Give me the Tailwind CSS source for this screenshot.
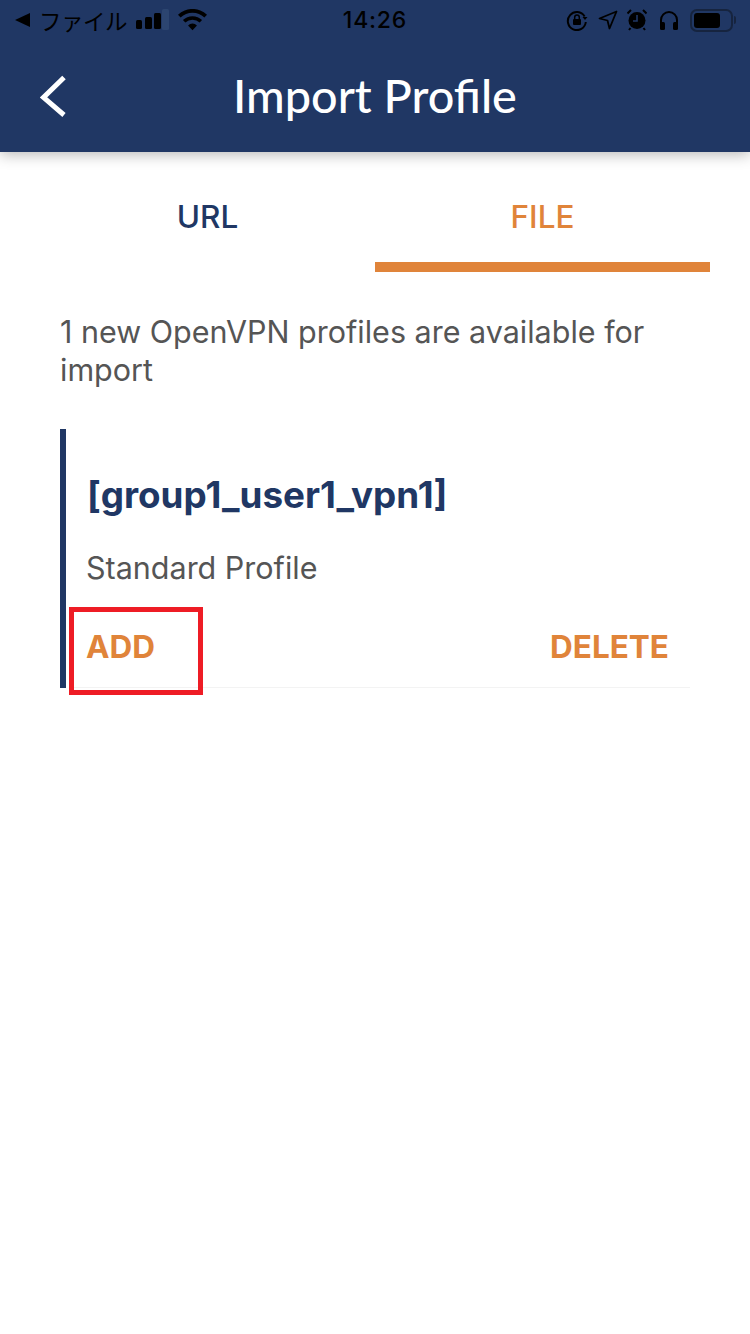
<!DOCTYPE html>
<html><head><meta charset="utf-8"><script src="https://cdn.jsdelivr.net/npm/@tailwindcss/browser@4"></script></head>
<body class="bg-white">
<div class="w-[750px] h-[1334px] bg-white overflow-hidden font-['Inter',sans-serif]">
  <header class="h-[152px] bg-[#203764] shadow-[0_2px_14px_rgba(0,0,0,0.3)] relative">
    <div class="h-[40px] grid grid-cols-[1fr_auto_1fr] items-center text-black">
      <div class="flex items-center pl-[15px]">
        <svg width="15" height="14" viewBox="0 0 15 14"><path d="M0 7L15 0V14Z" fill="#000"/></svg>
        <span class="ml-[9px] text-[22.5px] leading-[28px] font-['Noto_Sans_CJK_JP',sans-serif] tracking-[-0.5px]">ファイル</span>
        <svg class="ml-[9px]" width="33" height="22" viewBox="0 0 33 22"><rect x="0" y="11" width="6" height="9" rx="1.5"/><rect x="9" y="8" width="7" height="12" rx="1.5"/><rect x="18" y="4" width="7" height="16" rx="1.5"/><rect x="26" y="0" width="7" height="21" rx="1.5" fill="#2c4570"/></svg>
        <svg class="ml-[9px]" width="29" height="22" viewBox="0 0 30 22"><path d="M15 21.5L10.4 16.6a6.6 6.6 0 0 1 9.2 0Z"/><path d="M7.6 13.7a10.6 10.6 0 0 1 14.8 0l2.5-2.7a14.3 14.3 0 0 0-19.8 0Z"/><path d="M2.7 8.4a17.6 17.6 0 0 1 24.6 0L30 5.6a21.6 21.6 0 0 0-30 0Z"/></svg>
      </div>
      <span class="text-[23px] font-medium tracking-[0.8px] font-['Inter',sans-serif]">14:26</span>
      <div class="flex items-center justify-end pr-[14px]">
        <svg width="22" height="22" viewBox="0 0 22 22" fill="none" stroke="#000" stroke-width="2"><path d="M18.6 7.5A9 9 0 1 0 19.8 13"/><path d="M16.5 8L19 11l2.5-3Z" fill="#000" stroke="none"/><rect x="7" y="10" width="8" height="6" rx="1" fill="#000" stroke="none"/><path d="M8.700 10V8.300a2.300 2.300 0 0 1 4.600 0V10" stroke-width="1.500"/></svg>
        <svg class="ml-[10px]" width="20" height="20" viewBox="0 0 20 20" fill="none" stroke="#000" stroke-width="1.800" stroke-linejoin="round"><path d="M18.500 1.500L1.500 8.500l8 2 2 8Z"/></svg>
        <svg class="ml-[9px]" width="20" height="22" viewBox="0 0 20 22"><circle cx="10" cy="11.500" r="8.500"/><path d="M10 6v6h-4" fill="none" stroke="#203764" stroke-width="1.600"/><path d="M0.500 4.500L4 1M19.500 4.500L16 1M3.500 19L2 21M16.500 19L18 21" stroke="#000" stroke-width="2"/></svg>
        <svg class="ml-[12px]" width="20" height="20" viewBox="0 0 20 20" fill="none"><path d="M2 15V10a8 8 0 0 1 16 0v5" stroke="#000" stroke-width="2"/><rect x="1" y="12" width="5" height="8" rx="1.500" fill="#000"/><rect x="14" y="12" width="5" height="8" rx="1.500" fill="#000"/></svg>
        <div class="ml-[11px] flex items-center">
          <div class="w-[43px] h-[23px] rounded-[7px] border-2 border-[#16243f] p-[2px]"><div class="w-[26px] h-full rounded-[3px] bg-black"></div></div>
          <div class="ml-[1px] w-[2px] h-[8px] rounded-r bg-[#16243f]"></div>
        </div>
      </div>
    </div>
    <div class="h-[112px] relative flex items-center justify-center pb-[2px]">
      <svg class="absolute left-[38px] top-[34px]" width="30" height="44" viewBox="0 0 30 44" fill="none" stroke="#fff" stroke-width="5"><path d="M26 3.500L5.500 23.500 26 41"/></svg>
      <h1 class="text-white text-[46.8px] leading-[52px] font-['Lato',sans-serif] font-medium">Import Profile</h1>
    </div>
  </header>
  <main class="pt-[20px] px-[40px]">
    <div class="grid grid-cols-2">
      <div class="h-[100px] pt-[26px] text-center text-[#203764] text-[31.5px] leading-[38px] font-medium">URL</div>
      <div class="h-[100px] pt-[26px] text-center text-[#e0843a] text-[31.5px] leading-[38px] font-medium border-b-[10px] border-[#e0843a]">FILE</div>
    </div>
    <p class="mt-[41px] ml-[20px] w-[620px] text-[#555555] text-[30.5px] leading-[38px]">1 new OpenVPN profiles are available for import</p>
    <section class="mt-[40px] ml-[20px] border-l-[6px] border-[#203764] h-[259px] relative">
      <div class="pl-[21px] pt-[44px] pr-[41px]">
        <h2 class="text-[#203764] text-[36.8px] leading-[44px] font-bold">[group1_user1_vpn1]</h2>
        <p class="mt-[32px] -ml-[1px] text-[#555555] text-[30.5px] leading-[38px]">Standard Profile</p>
        <div class="mt-[41px] -ml-[1px] flex justify-between text-[#e0843a] text-[31.5px] leading-[38px] font-bold">
          <span>ADD</span><span>DELETE</span>
        </div>
      </div>
      <div class="absolute left-[3px] right-[20px] bottom-0 h-[1px] bg-[#f3f3f3]"></div>
      <div class="absolute left-[3px] top-[178px] w-[134px] h-[88px] border-[5px] border-[#ee1c25]"></div>
    </section>
  </main>
</div>
</body></html>
